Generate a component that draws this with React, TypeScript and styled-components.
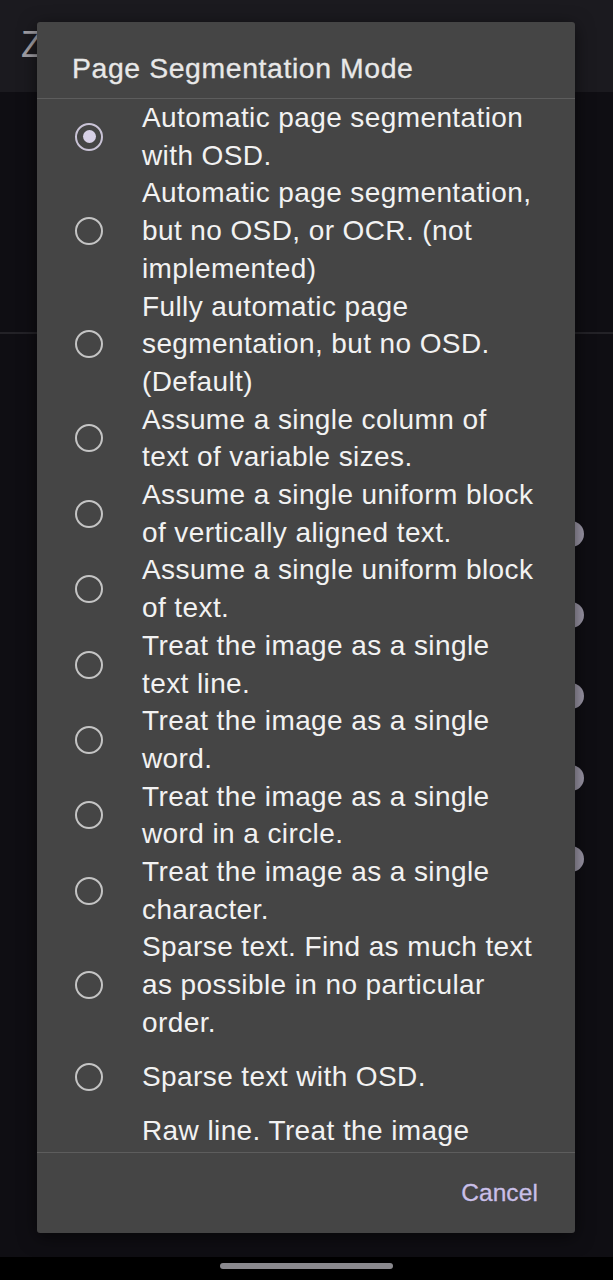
import React from "react";
import styled, { createGlobalStyle } from "styled-components";

const GlobalStyle = createGlobalStyle`
  html, body {
    margin: 0;
    padding: 0;
    background: #0f0e13;
  }
  body {
    font-family: "Liberation Sans", Arial, sans-serif;
  }
  * { box-sizing: border-box; }
`;

const Screen = styled.div`
  position: relative;
  width: 613px;
  height: 1280px;
  overflow: hidden;
  display: flex;
  flex-direction: column;
  background: #0f0e13;
`;

const AppBar = styled.header`
  height: 92px;
  flex: none;
  display: flex;
  align-items: center;
  padding-left: 21px;
  padding-bottom: 2px;
  background: #1b1a1f;
`;

const AppTitle = styled.span`
  font-size: 36px;
  color: #a19fa5;
  line-height: 1;
`;

const TopSection = styled.section`
  height: 242px;
  flex: none;
  border-bottom: 2px solid #232227;
`;

const SettingsList = styled.div`
  flex: 1;
  display: flex;
  flex-direction: column;
  padding-top: 159px;
`;

const SettingRow = styled.div`
  height: 81.3px;
  display: flex;
  align-items: center;
  justify-content: flex-end;
  padding-right: 29px;
`;

const Thumb = styled.span`
  width: 26px;
  height: 26px;
  border-radius: 50%;
  background: #9b96a6;
`;

const NavBar = styled.div`
  height: 23px;
  flex: none;
  background: #000;
  display: flex;
  justify-content: center;
  padding-top: 6px;
`;

const HomePill = styled.span`
  width: 173px;
  height: 6px;
  border-radius: 3px;
  background: #8a898e;
`;

const Dialog = styled.div`
  position: absolute;
  top: 22px;
  left: 37px;
  width: 538px;
  height: 1211px;
  background: #454545;
  border-radius: 3px;
  box-shadow: 0 4px 18px rgba(0, 0, 0, 0.55);
  display: flex;
  flex-direction: column;
  overflow: hidden;
`;

const DialogHeader = styled.div`
  height: 76px;
  flex: none;
  padding: 31px 0 0 35px;
`;

const DialogTitle = styled.h2`
  margin: 0;
  font-size: 28.4px;
  font-weight: 400;
  line-height: 30px;
  color: #e8e8e8;
  letter-spacing: 0.6px;
  -webkit-text-stroke: 0.3px #e8e8e8;
`;

const OptionList = styled.div`
  flex: 1;
  overflow: hidden;
  border-top: 1px solid #5d5d5d;
  border-bottom: 1px solid #5d5d5d;
  display: flex;
  flex-direction: column;
`;

const Option = styled.div`
  flex: none;
  display: flex;
  align-items: center;
  min-height: 70px;
  padding-left: 38px;
  gap: 39px;
`;

const Radio = styled.span<{ $checked?: boolean }>`
  flex: none;
  width: 28px;
  height: 28px;
  border-radius: 50%;
  border: 2.5px solid ${(p) => (p.$checked ? "#c9c3d6" : "#c4c4c4")};
  display: flex;
  align-items: center;
  justify-content: center;
  &::after {
    content: "";
    width: 13px;
    height: 13px;
    border-radius: 50%;
    background: ${(p) => (p.$checked ? "#d7d0e6" : "transparent")};
  }
`;

const OptionText = styled.div`
  display: flex;
  flex-direction: column;
`;

const Line = styled.span`
  white-space: nowrap;
  font-size: 28px;
  line-height: 37.7px;
  color: #f2f2f2;
  letter-spacing: 0.4px;
`;

const DialogFooter = styled.div`
  height: 80px;
  flex: none;
  display: flex;
  align-items: center;
  justify-content: flex-end;
  padding-right: 37px;
`;

const CancelButton = styled.button`
  background: none;
  border: none;
  padding: 0;
  font-family: inherit;
  font-size: 24.5px;
  color: #c9bfe8;
  letter-spacing: 0.1px;
  -webkit-text-stroke: 0.3px #c9bfe8;
  cursor: pointer;
`;

const options: string[][] = [
  ["Automatic page segmentation", "with OSD."],
  ["Automatic page segmentation,", "but no OSD, or OCR. (not", "implemented)"],
  ["Fully automatic page", "segmentation, but no OSD.", "(Default)"],
  ["Assume a single column of", "text of variable sizes."],
  ["Assume a single uniform block", "of vertically aligned text."],
  ["Assume a single uniform block", "of text."],
  ["Treat the image as a single", "text line."],
  ["Treat the image as a single", "word."],
  ["Treat the image as a single", "word in a circle."],
  ["Treat the image as a single", "character."],
  ["Sparse text. Find as much text", "as possible in no particular", "order."],
  ["Sparse text with OSD."],
  ["Raw line. Treat the image", "as a single text line,", "bypassing hacks that are", "Tesseract-specific."],
];

export default function App() {
  return (
    <>
      <GlobalStyle />
      <Screen>
        <AppBar>
          <AppTitle>Z</AppTitle>
        </AppBar>
        <TopSection />
        <SettingsList>
          {[0, 1, 2, 3, 4].map((i) => (
            <SettingRow key={i}>
              <Thumb />
            </SettingRow>
          ))}
        </SettingsList>
        <NavBar>
          <HomePill />
        </NavBar>
        <Dialog>
          <DialogHeader>
            <DialogTitle>Page Segmentation Mode</DialogTitle>
          </DialogHeader>
          <OptionList>
            {options.map((lines, i) => (
              <Option key={i}>
                <Radio $checked={i === 0} />
                <OptionText>
                  {lines.map((l, j) => (
                    <Line key={j}>{l}</Line>
                  ))}
                </OptionText>
              </Option>
            ))}
          </OptionList>
          <DialogFooter>
            <CancelButton>Cancel</CancelButton>
          </DialogFooter>
        </Dialog>
      </Screen>
    </>
  );
}
